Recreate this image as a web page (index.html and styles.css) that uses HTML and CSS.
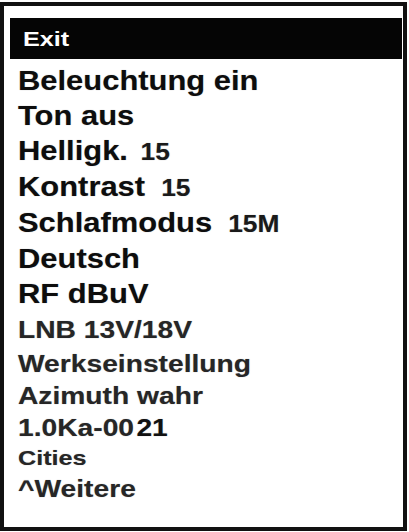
FILE: index.html
```html
<!DOCTYPE html>
<html lang="de">
<head>
<meta charset="utf-8">
<title>Menü</title>
<link rel="stylesheet" href="styles.css">
</head>
<body>
<div class="frame">
  <div class="bar"><span class="bar-text">Exit</span></div>
  <div class="menu">
    <div class="row big">Beleuchtung ein</div>
    <div class="row big">Ton aus</div>
    <div class="row big">Helligk.<span class="val tight">15</span></div>
    <div class="row big">Kontrast<span class="val">15</span></div>
    <div class="row big">Schlafmodus<span class="val">15M</span></div>
    <div class="row big">Deutsch</div>
    <div class="row big">RF dBuV</div>
    <div class="row mid lnb">LNB 13V/18V</div>
    <div class="row mid">Werkseinstellung</div>
    <div class="row mid">Azimuth wahr</div>
    <div class="row mid">1.0Ka-00<span class="ver">21</span></div>
    <div class="row small">Cities</div>
    <div class="row mid last">^Weitere</div>
  </div>
</div>
</body>
</html>
```
FILE: styles.css
```css
html, body {
  margin: 0;
  padding: 0;
  background: #ffffff;
}

body {
  width: 409px;
  height: 532px;
  overflow: hidden;
  font-family: "Liberation Sans", Arial, sans-serif;
  font-weight: bold;
}

.frame {
  box-sizing: border-box;
  width: 407px;
  height: 529px;
  margin: 2px 2px 1px 0;
  border: 4px solid #111111;
  background: #ffffff;
  overflow: hidden;
}

.bar {
  height: 41px;
  margin: 12px 1px 0 6px;
  padding-left: 13px;
  background: #050505;
  line-height: 41px;
}

.bar-text {
  display: inline-block;
  color: #ffffff;
  font-size: 21px;
  transform: scaleX(1.2);
  transform-origin: left center;
}

.menu {
  margin-top: 5px;
  padding-left: 14px;
}

.row {
  width: fit-content;
  white-space: nowrap;
  transform-origin: left center;
  text-shadow: 0 0 1px rgba(0, 0, 0, 0.35);
}

.big {
  font-size: 27px;
  line-height: 35px;
  color: #0d0d0d;
  transform: scaleX(1.145);
}

.mid {
  font-size: 23.5px;
  line-height: 32px;
  color: #262626;
  transform: scaleX(1.2);
}

.lnb {
  line-height: 36px;
}

.small {
  font-size: 21px;
  line-height: 28px;
  color: #262626;
  transform: scaleX(1.2);
}

.last {
  line-height: 34px;
}

.val {
  margin-left: 14px;
  font-size: 23px;
  color: #1a1a1a;
}

.val.tight {
  margin-left: 11px;
}

.ver {
  margin-left: 2px;
  color: #111111;
}
```
